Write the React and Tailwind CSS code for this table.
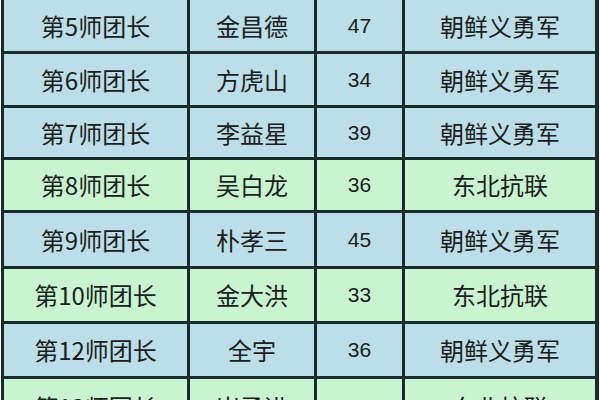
const rows = [
  { unit: "第5师团长", name: "金昌德", age: "47", origin: "朝鲜义勇军", green: false, h: "h-[51px]" },
  { unit: "第6师团长", name: "方虎山", age: "34", origin: "朝鲜义勇军", green: false, h: "h-[51px]" },
  { unit: "第7师团长", name: "李益星", age: "39", origin: "朝鲜义勇军", green: false, h: "h-[49px]" },
  { unit: "第8师团长", name: "吴白龙", age: "36", origin: "东北抗联", green: true, h: "h-[50px]" },
  { unit: "第9师团长", name: "朴孝三", age: "45", origin: "朝鲜义勇军", green: false, h: "h-[53px]" },
  { unit: "第10师团长", name: "金大洪", age: "33", origin: "东北抗联", green: true, h: "h-[52px]" },
  { unit: "第12师团长", name: "全宇", age: "36", origin: "朝鲜义勇军", green: false, h: "h-[52px]" },
  { unit: "第13师团长", name: "崔勇进", age: "35", origin: "东北抗联", green: true, h: "h-[56px]" },
];

function Cell({ children, green, num }) {
  return (
    <div
      className={`flex items-center justify-center ${green ? "bg-[#c8f5cf]" : "bg-[#bcdee8]"} ${
        num ? "text-[21px] font-['Liberation_Sans',sans-serif]" : "text-[24px]"
      }`}
    >
      {children}
    </div>
  );
}

export default function App() {
  return (
    <div className="w-[600px] h-[400px] overflow-hidden bg-white font-['Noto_Sans_CJK_SC',sans-serif] text-[#1a2020]">
      <div className="ml-[1px] w-[598px] bg-[#1a2b2d] px-[3px] flex flex-col gap-[3px]">
        {rows.map((r) => (
          <div key={r.unit} className={`grid grid-cols-[183px_124px_85px_190px] gap-[3px] ${r.h}`}>
            <Cell green={r.green}>{r.unit}</Cell>
            <Cell green={r.green}>{r.name}</Cell>
            <Cell green={r.green} num>
              {r.age}
            </Cell>
            <Cell green={r.green}>{r.origin}</Cell>
          </div>
        ))}
      </div>
    </div>
  );
}
